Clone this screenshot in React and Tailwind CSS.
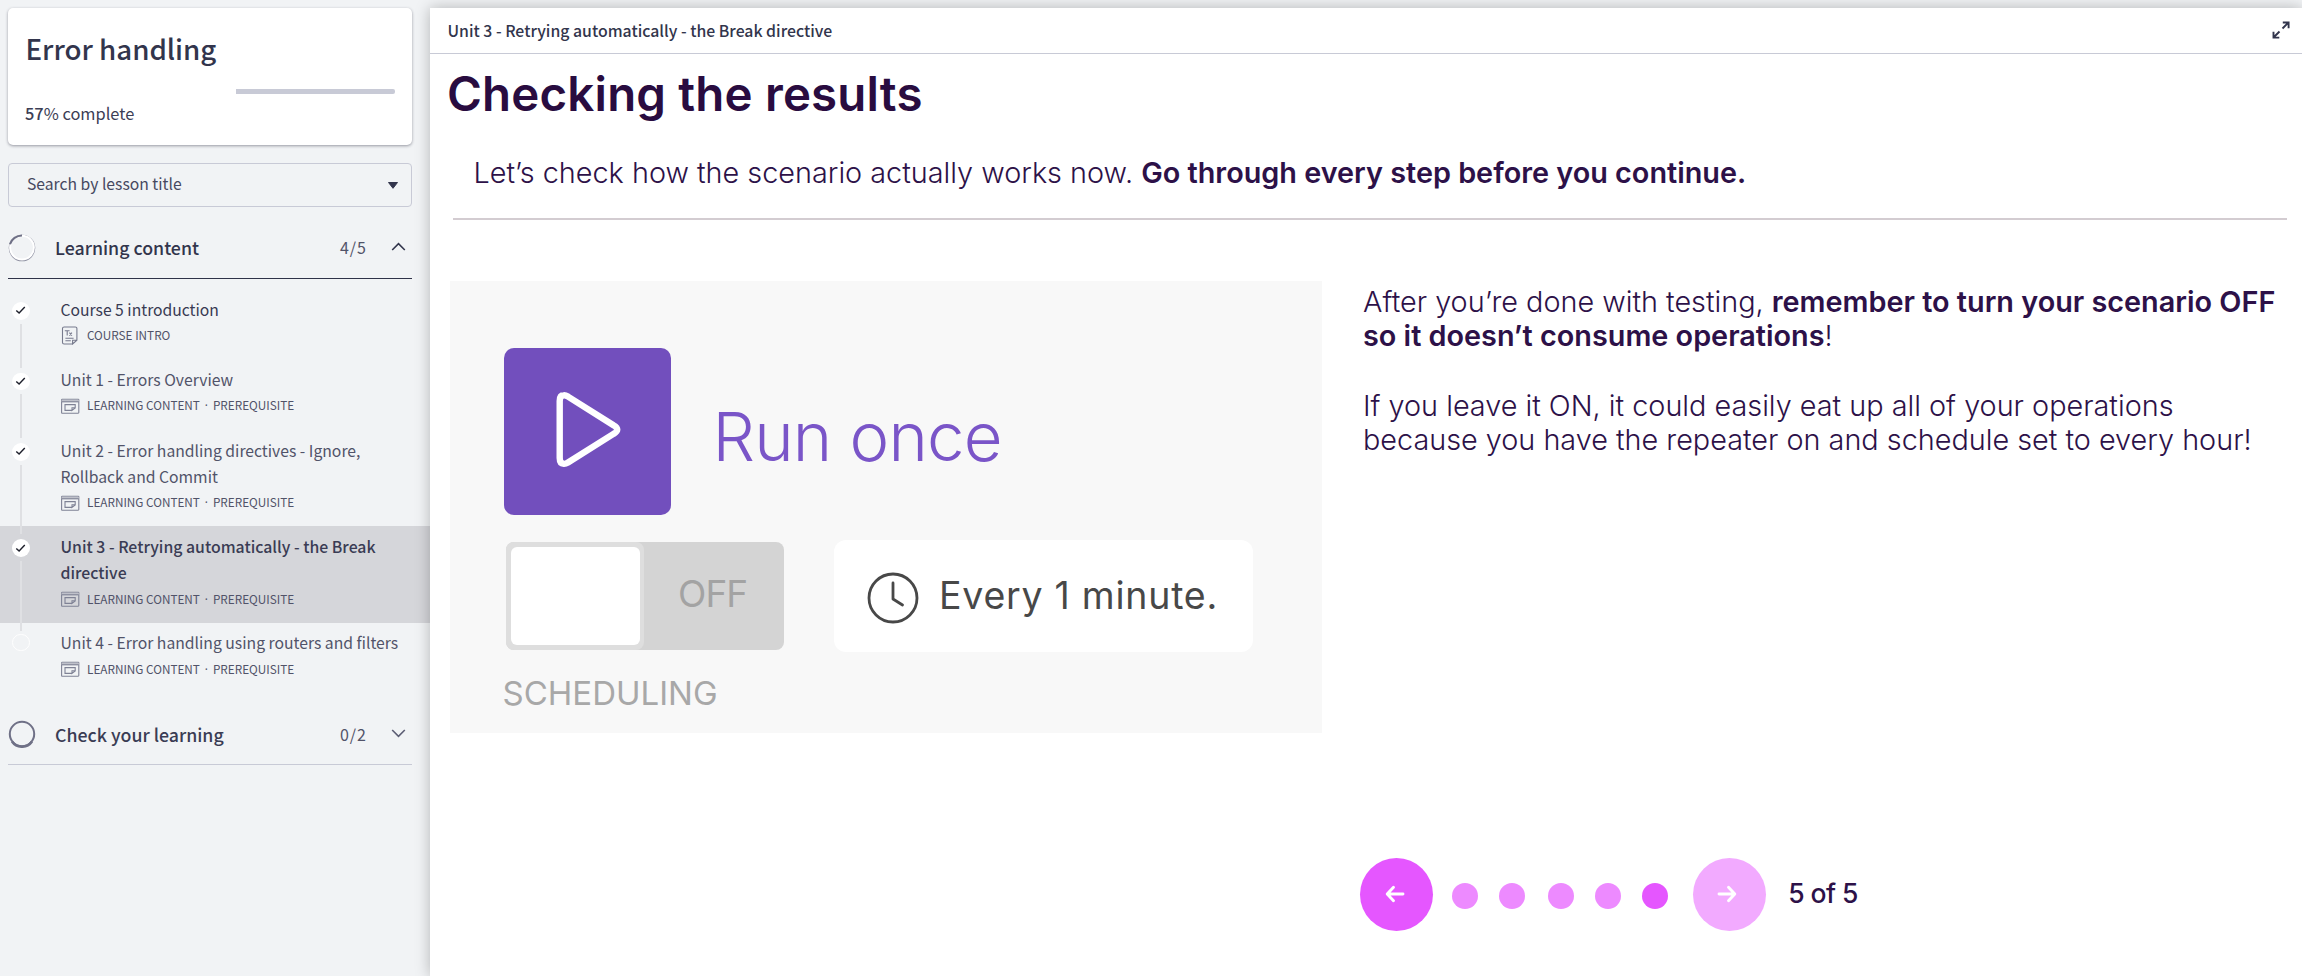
const items = [
  { lines: ["Course 5 introduction"], intro: true, done: true },
  { lines: ["Unit 1 - Errors Overview"], done: true },
  { lines: ["Unit 2 - Error handling directives - Ignore,", "Rollback and Commit"], done: true },
  { lines: ["Unit 3 - Retrying automatically - the Break", "directive"], done: true, active: true },
  { lines: ["Unit 4 - Error handling using routers and filters"], last: true },
];

function IntroIcon() {
  return (
    <svg className="mt-[2px] h-[19px] w-[19px] shrink-0" viewBox="0 0 19 19" fill="none" stroke="#777a8d" strokeWidth="1.1">
      <path d="M11.6 18H3.1a1.6 1.6 0 0 1-1.6-1.6V2.6A1.6 1.6 0 0 1 3.1 1h11.2a1.6 1.6 0 0 1 1.6 1.6v11.6L11.6 18v-3.8h4.3" />
      <path d="M3.8 4.8h4.8M6.2 4.8v4.8M8.4 6.6l2.5 3M10.9 6.6l-2.5 3M4.4 12.2h8.2M4.4 14.8h5.4" />
    </svg>
  );
}

function LessonIcon() {
  return (
    <svg className="mt-[1.5px] h-[19px] w-[19px] shrink-0" viewBox="0.6 0 19 19" fill="none" stroke="#7f8295" strokeWidth="1.1">
      <rect x="1.2" y="2.2" width="17.2" height="14" rx="0.6" />
      <path d="M1.2 2.8h17.2v2.2H1.2z" fill="#bfc1ca" stroke="none" />
      <path d="M1.2 4.8h17.2" />
      <path d="M11.6 13.4H4.6V7.6h10.2v3.4l-3.2 2.4v-2.6h3.2" />
    </svg>
  );
}

function Lesson({ item }) {
  return (
    <li
      className={
        "flex " +
        (item.lines.length > 1 ? "h-[96.4px] " : "h-[70.5px] ") +
        (item.active ? "bg-[#d5d6da]" : "")
      }
    >
      <div className={"flex w-[60.5px] shrink-0 flex-col items-start pl-[12px] " + (item.last ? "pt-[11px]" : "pt-[13px]")}>
        {item.done ? (
          <span className="relative z-10 flex size-[17.5px] items-center justify-center rounded-full bg-white">
            <svg className="size-[11px]" viewBox="0 0 11 11" fill="none" stroke="#1d1f2b" strokeWidth="1.4">
              <path d="M1.3 5.4l2.8 2.7L9.8 2" />
            </svg>
          </span>
        ) : (
          <span className="size-[17.5px] rounded-full border border-white" />
        )}
        {!item.last && <span className="relative z-10 -mb-2 ml-2 mt-1 w-[2px] flex-1 bg-[#dfe0e3]" />}
      </div>
      <div className="flex flex-col pt-[7.7px]">
        {item.lines.map((line) => (
          <span
            key={line}
            className={
              "whitespace-nowrap leading-[26.3px] " +
              (item.active ? "text-[15.83px] font-medium text-[#3a3c54]" : item.intro ? "text-[15.7px] text-[#383a52]" : "text-[15.73px] text-[#515369]")
            }
          >
            {line}
          </span>
        ))}
        <div className="mt-[3px] flex h-[18px] items-center whitespace-nowrap text-[11.75px] leading-[18px] text-[#515369]">
          {item.intro ? <IntroIcon /> : <LessonIcon />}
          <span className="ml-[7.5px]">{item.intro ? "COURSE INTRO" : "LEARNING CONTENT"}</span>
          {!item.intro && (
            <>
              <span className="w-[13px] text-center font-['Noto_Sans']">·</span>
              <span>PREREQUISITE</span>
            </>
          )}
        </div>
      </div>
    </li>
  );
}

function Sidebar() {
  return (
    <aside className="flex w-[430px] shrink-0 flex-col pt-2 font-['Noto_Sans_CJK_SC','Noto_Sans',sans-serif]">
      <section className="mx-2 h-[137px] w-[404px] rounded-[5px] bg-white px-[17px] pt-[18.5px] shadow-[0_1px_3px_rgba(40,42,60,0.45)]">
        <h1 className="ml-[0.5px] text-[27.7px] font-medium leading-[42px] text-[#32354c]">Error handling</h1>
        <div className="mt-[20.5px] flex justify-end">
          <div className="h-[5px] w-[159px] rounded-r-[2px] bg-[#c8cad6]" />
        </div>
        <p className="mt-[6px] text-[16.4px] leading-[26px] text-[#3c3e55]">
          <span className="font-medium">57</span>% complete
        </p>
      </section>

      <div className="mx-2 mt-[18px] flex h-[44px] w-[404px] items-center justify-between rounded-[4px] border border-[#c8cad6] pb-[2px] pl-[18px] pr-[13px]">
        <span className="text-[15.7px] leading-6 text-[#46485f]">Search by lesson title</span>
        <svg className="mt-[2px] h-[7px] w-[10px]" viewBox="0 0 10 7">
          <path d="M0.5 0.5h9L5 6.3z" fill="#32354c" stroke="#32354c" strokeLinejoin="round" />
        </svg>
      </div>

      <div className="mx-2 flex h-[72px] w-[404px] items-center border-b border-[#2f3248]">
        <svg className="mt-[10px] size-[28px]" viewBox="0 0 28 28" fill="none">
          <circle cx="14" cy="14" r="12.5" stroke="#8d8fa0" strokeWidth="1.6" />
          <circle cx="14" cy="13.6" r="11.9" fill="#f1f3f5" stroke="#fff" strokeWidth="2" />
          <path d="M2 10.2A12.5 12.5 0 0 1 14 1.4" stroke="#6f7086" strokeWidth="2" />
        </svg>
        <span className="ml-[19px] mt-[9px] flex-1 text-[17.75px] font-medium leading-7 text-[#32354c]">Learning content</span>
        <span className="mr-[24px] mt-[9px] text-[16px] leading-7 tracking-[1px] text-[#515369]">4/5</span>
        <svg className="mr-[6px] mt-[7px] h-[9px] w-[15px]" viewBox="0 0 15 9" fill="none" stroke="#32354c" strokeWidth="1.6">
          <path d="M1.2 8L7.5 1.7 13.8 8" />
        </svg>
      </div>

      <ul className="mt-[10px]">
        {items.map((item) => (
          <Lesson key={item.lines[0]} item={item} />
        ))}
      </ul>

      <div className="mx-2 flex h-[72px] w-[404px] items-center border-b border-[#c8cad6]">
        <svg className="mt-[11px] size-[28px]" viewBox="0 0 28 28" fill="none">
          <circle cx="14" cy="14" r="12.2" stroke="#6f7086" strokeWidth="2" />
          <path d="M4 21.5a12.2 12.2 0 0 0 20 0" stroke="#6f7086" strokeWidth="2.6" />
        </svg>
        <span className="ml-[19px] mt-[11px] flex-1 text-[17.75px] font-medium leading-7 text-[#3a3c54]">Check your learning</span>
        <span className="mr-[24px] mt-[10px] text-[16px] leading-7 tracking-[1px] text-[#515369]">0/2</span>
        <svg className="mr-[6px] mt-[10px] h-[9px] w-[15px]" viewBox="0 0 15 9" fill="none" stroke="#5c5e74" strokeWidth="1.6">
          <path d="M1.2 1L7.5 7.3 13.8 1" />
        </svg>
      </div>
    </aside>
  );
}

function Illustration() {
  return (
    <div className="flex h-[452px] w-[872px] shrink-0 flex-col bg-[#f8f8f8] pl-[54px] pt-[66.5px]">
      <div className="flex h-[168px]">
        <div className="flex size-[167px] items-center justify-center rounded-[10px] bg-[#724fbd]">
          <svg className="h-[80px] w-[70px]" viewBox="0 0 70 80" fill="none" stroke="#fff" strokeWidth="6.4" strokeLinejoin="round">
            <path d="M6.7 10Q6.7 4.4 10.8 4.3Q12.5 4.1 15 5.6L60.5 34.3Q68 38.6 60.5 42.9L15 71.5Q12.5 73 10.8 72.8Q6.7 72.6 6.7 67z" />
          </svg>
        </div>
        <span className="ml-[41.5px] mt-[49.5px] whitespace-nowrap text-[67px] font-light leading-[80px] tracking-[-0.8px] text-[#7a55c8]">Run once</span>
      </div>
      <div className="mt-[24.5px] flex items-start">
        <div className="ml-[2px] mt-[2px] flex h-[108px] w-[278px] items-center rounded-[8px] bg-[#d4d4d4]">
          <div className="h-full w-[138px] rounded-[8px] bg-[#dedede] p-[5px]">
            <div className="h-full w-[129px] rounded-[6px] bg-white" />
          </div>
          <span className="ml-[34px] mt-[-4px] text-[37px] leading-[44px] tracking-[-0.9px] text-[#a3a3a3]">OFF</span>
        </div>
        <div className="ml-[50px] flex h-[112px] w-[419px] items-center rounded-[12px] bg-white pl-[33px]">
          <svg className="mt-[4px] size-[52px]" viewBox="0 0 52 52" fill="none" stroke="#484848" strokeWidth="2.8" strokeLinecap="round" strokeLinejoin="round">
            <circle cx="26" cy="26" r="24" />
            <path d="M26 11v16l9.5 6" />
          </svg>
          <span className="ml-[20px] whitespace-nowrap text-[37.5px] leading-[44px] tracking-[0.75px] text-[#484848]">Every 1 minute.</span>
        </div>
      </div>
      <span className="ml-[-1.5px] mt-[21px] text-[33px] leading-[40px] text-[#a8a8a8]">SCHEDULING</span>
    </div>
  );
}

function Arrow({ left }) {
  return (
    <svg className="size-[22px]" viewBox="0 0 22 22" fill="none" stroke="#fff" strokeWidth="2.9" strokeLinecap="round" strokeLinejoin="round">
      {left ? <path d="M19 11H3.5M9.5 4.3L3.2 11l6.3 6.7" /> : <path d="M3 11h15.5M12.5 4.3L18.8 11l-6.3 6.7" />}
    </svg>
  );
}

function Pager() {
  return (
    <nav className="flex h-[73px] items-center">
      <span className="flex size-[73px] items-center justify-center rounded-full bg-[#e556ff] pr-[4px]">
        <Arrow left />
      </span>
      <div className="ml-[19px] mt-[4px] flex gap-[21.2px]">
        {[0, 1, 2, 3].map((n) => (
          <span key={n} className={"size-[26px] rounded-full bg-[#ed8aff] " + (n === 1 ? "mr-[1.6px]" : "")} />
        ))}
        <span className="size-[26px] rounded-full bg-[#e556ff]" />
      </div>
      <span className="ml-[25px] flex size-[73px] items-center justify-center rounded-full bg-[#f2aaff] pr-[5px]">
        <Arrow />
      </span>
      <span className="ml-[22px] mt-[-3px] text-[26.5px] font-medium leading-8 tracking-[-0.6px]">5 of 5</span>
    </nav>
  );
}

export default function App() {
  return (
    <div className="flex h-[976px] w-[2302px] overflow-hidden bg-[#f1f3f5]">
      <Sidebar />
      <main className="relative z-20 mt-2 flex flex-1 flex-col bg-white shadow-[0_0_14px_rgba(0,0,0,0.26)]">
        <header className="flex h-[46px] items-center justify-between border-b border-[#c8cad6] pl-[17.5px] pr-[12px]">
          <span className="font-['Noto_Sans_CJK_SC','Noto_Sans',sans-serif] text-[15.83px] font-medium leading-6 text-[#32354c]">
            Unit 3 - Retrying automatically - the Break directive
          </span>
          <svg className="mt-[-1px] size-[18px]" viewBox="0 0 18 18" fill="none" stroke="#32354c" strokeWidth="1.9">
            <path d="M10.5 7.5L16.5 1.5M10.8 1.5h5.8v5.8M7.5 10.5L1.5 16.5M1.5 10.8v5.8h5.8" />
          </svg>
        </header>

        <article className="flex flex-1 flex-col font-['Inter',sans-serif] text-[#2d1148]">
          <h2 className="ml-[17px] mt-[9px] whitespace-nowrap text-[47.4px] font-semibold leading-[62px] tracking-[0.2px] text-[#290c40]">Checking the results</h2>
          <p className="ml-[43.5px] mt-[27.5px] whitespace-nowrap text-[28.8px] font-light leading-[40px]">
            Let’s check how the scenario actually works now. <b className="font-semibold">Go through every step before you continue.</b>
          </p>
          <div className="ml-[23px] mt-[25.5px] h-[2px] w-[1834px] bg-[#d3ccd1]" />
          <div className="ml-[20px] mt-[61px] flex">
            <Illustration />
            <div className="ml-[41px] mt-[3.5px] whitespace-nowrap text-[28.8px] font-light leading-[34.7px]">
              <p>
                After you’re done with testing, <b className="font-semibold">remember to turn your scenario OFF</b>
                <br />
                <b className="font-semibold">so it doesn’t consume operations</b>!
              </p>
              <p className="mt-[34.7px]">
                If you leave it ON, it could easily eat up all of your operations
                <br />
                because you have the repeater on and schedule set to every hour!
              </p>
            </div>
          </div>
          <div className="ml-[930px] mt-[124.5px]">
            <Pager />
          </div>
        </article>
      </main>
    </div>
  );
}
